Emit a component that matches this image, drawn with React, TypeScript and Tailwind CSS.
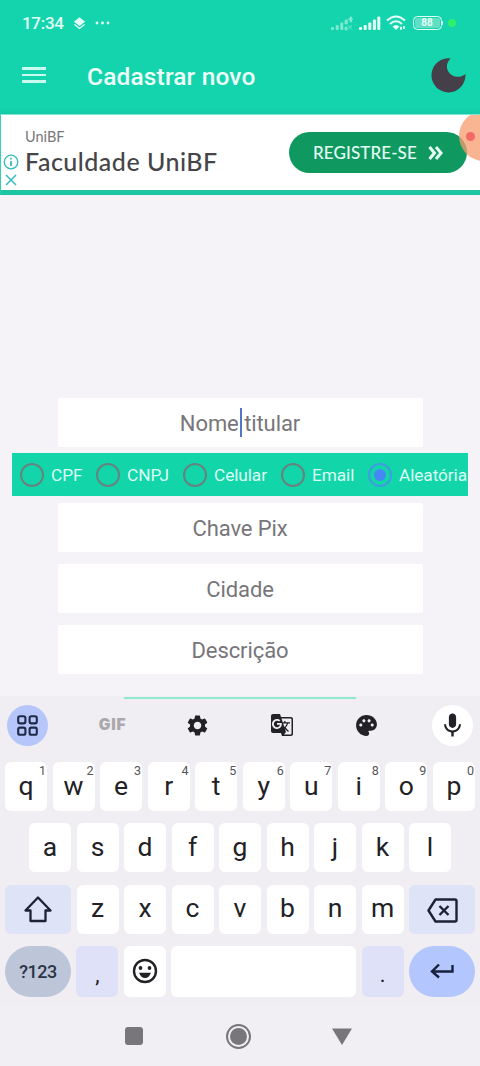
import {
  MdGTranslate,
  MdLayers,
  MdMic,
  MdPalette,
  MdSettings,
} from "react-icons/md";

const fields = ["Chave Pix", "Cidade", "Descrição"];

const keyTypes = [
  { label: "CPF", width: "w-[76px]" },
  { label: "CNPJ", width: "w-[87px]" },
  { label: "Celular", width: "w-[98px]" },
  { label: "Email", width: "w-[87px]" },
  { label: "Aleatória", width: "w-[90px]", checked: true },
];

const topRow = ["q", "w", "e", "r", "t", "y", "u", "i", "o", "p"];
const homeRow = ["a", "s", "d", "f", "g", "h", "j", "k", "l"];
const bottomRow = ["z", "x", "c", "v", "b", "n", "m"];

const Signal = ({ dim }: { dim?: boolean }) => (
  <svg width="22" height="15" viewBox="0 0 22 15" fill="#e4fff7" opacity={dim ? 0.5 : 1}>
    <rect x="0" y="11" width="3" height="3" rx="1" />
    <rect x="4.7" y="9" width="3" height="5" rx="1" />
    <rect x="9.3" y="6.5" width="3" height="7.5" rx="1" />
    {dim ? (
      <path d="M14 4h2.4v4H14zM14 11h2v3h-2zM19 1h1.6v5H19zM17.3 3.5L19.8 1l2 2.5zM17 9l4 4.5M21 9l-4 4.5" stroke="#e4fff7" strokeWidth="0.8" />
    ) : (
      <>
        <rect x="13.9" y="3.5" width="3" height="10.5" rx="1" />
        <rect x="18.3" y="0.5" width="3" height="13.5" rx="1" />
      </>
    )}
  </svg>
);

const StatusBar = () => (
  <div className="flex h-[46px] items-center pl-[22px] pr-[24px] text-[#e4fff7]">
    <span className="w-[42px] text-[17px] leading-none font-medium tracking-[-0.3px]">17:34</span>
    <MdLayers className="ml-[8px] size-[15px]" />
    <svg className="ml-[8px]" width="15" height="4" viewBox="0 0 15 4" fill="currentColor">
      <circle cx="2" cy="2" r="1.4" />
      <circle cx="7.5" cy="2" r="1.4" />
      <circle cx="13" cy="2" r="1.4" />
    </svg>
    <div className="ml-auto flex items-center">
      <Signal dim />
      <span className="w-[6px]" />
      <Signal />
      <svg className="ml-[5px]" width="20" height="16" viewBox="0 0 20 16" fill="none" stroke="currentColor" strokeWidth="2">
        <path d="M1 5.5Q10-2.5 19 5.5M4 9Q10 3.5 16 9" />
        <path d="M6.5 11.5Q10 8.5 13.5 11.5L10 15z" fill="currentColor" stroke="none" />
        <path d="M15 14.8v-3M18 11v3" strokeWidth="1.8" />
      </svg>
      <div className="ml-[7px] flex h-[14px] w-[29px] items-center justify-center rounded-[4.5px] border-[1.5px] border-current p-[1px]">
        <span className="flex h-full w-full items-center justify-center rounded-[2px] bg-[#5fe0c4] text-[10px] leading-none font-bold">88</span>
      </div>
      <span className="h-[4px] w-[1.5px] rounded-r bg-current" />
      <span className="ml-[5px] size-[8px] rounded-full bg-[#2ff06a]" />
    </div>
  </div>
);

const Header = () => (
  <header className="h-[114px] bg-[linear-gradient(#14d4ad_108px,#14c9a6_114px)]">
    <StatusBar />
    <div className="flex h-[61px] items-center pl-[22px] pr-[14px]">
      <div className="mb-[3px] flex w-[24px] flex-col gap-[4px]">
        <span className="h-[2.8px] bg-[#c9fbee]" />
        <span className="h-[2.8px] bg-[#c9fbee]" />
        <span className="h-[2.8px] bg-[#c9fbee]" />
      </div>
      <h1 className="ml-[41px] pt-[1px] text-[24.5px] leading-none font-medium tracking-[0.15px] text-[#effffa]">Cadastrar novo</h1>
      <svg className="mb-[2px] ml-auto" width="35" height="35" viewBox="0 0 35 35">
        <path d="M19.5.5A17 17 0 1 0 34.4 16C31 19.2 25.5 19.8 21 17.2C15 13.7 14 6 19.5.5z" fill="#443f48" />
      </svg>
    </div>
  </header>
);

const AdBanner = () => (
  <div className="relative flex h-[81px] items-center overflow-hidden border-t border-b-[5px] border-l border-t-[#7de8cf] border-b-[#1fc5a3] border-l-[#35d2b2] bg-white font-['Lato',sans-serif]">
    <div className="flex w-[24px] flex-col items-center self-end pr-[4px] pb-[4px]">
      <svg width="16" height="16" viewBox="0 0 16 16" fill="none" stroke="#35bdbd" strokeWidth="1.3">
        <circle cx="8" cy="8" r="6.8" />
        <path d="M8 7v5M8 3.8v1.7" strokeWidth="1.8" />
      </svg>
      <svg className="mt-[4px]" width="12" height="12" viewBox="0 0 12 12" fill="none" stroke="#35bdbd" strokeWidth="1.5">
        <path d="M1 1l10 10M11 1L1 11" />
      </svg>
    </div>
    <div className="pb-[1px]">
      <p className="text-[14.5px] leading-[18px] text-[#77777a]">UniBF</p>
      <p className="w-[210px] text-[25px] leading-[31px] font-medium tracking-[0.5px] whitespace-nowrap text-[#454548]">Faculdade UniBF</p>
    </div>
    <div className="ml-auto mr-[13px] flex h-[41px] w-[178px] shrink-0 items-center rounded-full bg-[#0f9961] pl-[24px] text-[17px] font-medium text-[#e5fff4]">
      <span className="w-[106px] tracking-[0.1px] whitespace-nowrap">REGISTRE-SE</span>
      <svg className="ml-[9px]" width="15" height="14" viewBox="0 0 15 14" fill="none" stroke="currentColor" strokeWidth="3">
        <path d="M1.5 1l5 6-5 6M8 1l5 6-5 6" />
      </svg>
    </div>
    <span className="absolute -right-[29px] -top-[4px] flex size-[50px] items-center rounded-full bg-[#f79b6e]/75 pl-[7px]">
      <span className="size-[9px] rounded-full bg-[#f0565a]/80" />
    </span>
  </div>
);

const Form = () => (
  <main className="flex h-[501px] flex-col items-center overflow-hidden bg-[#f5f3f7] pt-[203px] text-[22px] text-[#77757a]">
    <div className="flex h-[49px] w-[365px] items-center justify-center rounded-[2px] bg-white">
      <span className="pt-[2px] tracking-[-0.1px]">Nome</span>
      <span className="mx-[1px] h-[29px] w-[2px] bg-[#5275c8]" />
      <span className="pt-[2px] pl-[1.5px] tracking-[-0.1px]">titular</span>
    </div>
    <div className="mt-[6px] mb-[7px] flex h-[43px] w-[456px] shrink-0 items-center overflow-hidden bg-[#12d5a9] pl-[8px]">
      {keyTypes.map((k) => (
        <label key={k.label} className={`flex shrink-0 items-center ${k.width}`}>
          <span className={`flex size-[24px] shrink-0 items-center justify-center rounded-full border-[2.5px] ${k.checked ? "border-[#3d9ddf]" : "border-[#66837f]"}`}>
            {k.checked && <span className="size-[12px] rounded-full bg-[#4587f5]" />}
          </span>
          <span className="pt-[2px] pl-[7px] text-[17.3px] leading-none tracking-[-0.1px] whitespace-nowrap text-[#dcfff5]">{k.label}</span>
        </label>
      ))}
    </div>
    <div className="flex flex-col gap-[12.5px]">
      {fields.map((f) => (
        <div key={f} className="flex h-[48.5px] w-[365px] items-center justify-center rounded-[2px] bg-white pt-[1.5px] tracking-[-0.1px]">
          {f}
        </div>
      ))}
    </div>
  </main>
);

const Key = ({ label, hint }: { label: string; hint?: string }) => (
  <div className="relative flex h-[49px] w-[42px] items-center justify-center rounded-[6px] bg-white pb-[1px] text-[26.5px] leading-none">
    {label}
    {hint && <span className="absolute top-[3px] right-px text-[12.5px] leading-none text-[#555358]">{hint}</span>}
  </div>
);

const Toolbar = () => (
  <div className="flex h-[58px] items-center justify-between px-[7px]">
    <div className="flex size-[41px] items-center justify-center rounded-full bg-[#b6c6fb]">
      <svg width="21" height="21" viewBox="0 0 21 21" fill="none" stroke="#1e2b48" strokeWidth="2.1">
        <rect x="1.2" y="1.2" width="7.2" height="7.2" rx="1.8" />
        <rect x="12.6" y="1.2" width="7.2" height="7.2" rx="1.8" />
        <rect x="1.2" y="12.6" width="7.2" height="7.2" rx="1.8" />
        <rect x="12.6" y="12.6" width="7.2" height="7.2" rx="1.8" />
      </svg>
    </div>
    <div className="flex w-[41px] justify-center font-['Inter',sans-serif] text-[15.5px] font-black tracking-[0.8px] text-[#aaa8ac]">GIF</div>
    <div className="flex w-[41px] justify-center pr-[1px]"><MdSettings className="size-[25px]" /></div>
    <div className="flex w-[41px] justify-center pr-[2px]"><MdGTranslate className="size-[24px]" /></div>
    <div className="flex w-[41px] justify-center pr-[3px]"><MdPalette className="size-[25px]" /></div>
    <div className="flex size-[41px] items-center justify-center rounded-full bg-white"><MdMic className="size-[29px]" /></div>
  </div>
);

const Keyboard = () => (
  <section className="relative h-[310px] bg-[#f0eef2] text-[#222125]">
    <span className="absolute top-[1px] left-[124px] h-[2px] w-[232px] bg-[#90e8cd]" />
    <Toolbar />
    <div className="mt-[8px] flex flex-col gap-[12.3px] px-[5px]">
      <div className="flex justify-between">
        {topRow.map((k, i) => <Key key={k} label={k} hint={String((i + 1) % 10)} />)}
      </div>
      <div className="flex justify-between px-[24px]">
        {homeRow.map((k) => <Key key={k} label={k} />)}
      </div>
      <div className="flex justify-between">
        <div className="flex h-[49px] w-[66px] items-center justify-center rounded-[6px] bg-[#dee3f7]">
          <svg width="28" height="27" viewBox="0 0 28 27" fill="none" stroke="#1c2236" strokeWidth="2.3" strokeLinejoin="round">
            <path d="M14 1.5L26.5 14.5H21.5V25H6.5V14.5H1.5z" />
          </svg>
        </div>
        {bottomRow.map((k) => <Key key={k} label={k} />)}
        <div className="flex h-[49px] w-[66px] items-center justify-center rounded-[6px] bg-[#dee3f7]">
          <svg className="mt-[2px]" width="31" height="25" viewBox="0 0 31 25" fill="none" stroke="#1c2236" strokeWidth="2.4" strokeLinejoin="round">
            <path d="M8.5 1.5H28Q29.5 1.5 29.5 3V22Q29.5 23.5 28 23.5H8.5L1.5 12.5z" />
            <path d="M12.5 8l9 9M21.5 8l-9 9" />
          </svg>
        </div>
      </div>
      <div className="flex justify-between">
        <div className="flex h-[51px] w-[66px] items-center justify-center rounded-[26px] bg-[#bdc5d9] text-[18px] font-medium tracking-[-0.5px] text-[#2b3548]">?123</div>
        <div className="flex h-[51px] w-[42px] items-center justify-center rounded-[6px] bg-[#dee1f8] pt-[7px] text-[22px]">,</div>
        <div className="flex h-[51px] w-[42px] items-center justify-center rounded-[6px] bg-white">
          <svg width="26" height="26" viewBox="0 0 26 26">
            <circle cx="13" cy="13" r="11" fill="none" stroke="currentColor" strokeWidth="2.4" />
            <circle cx="8.5" cy="10" r="1.9" fill="currentColor" />
            <circle cx="17.5" cy="10" r="1.9" fill="currentColor" />
            <path d="M7 14.8h12Q17 20 13 20T7 14.8z" fill="currentColor" />
          </svg>
        </div>
        <div className="h-[51px] w-[185px] rounded-[6px] bg-white" />
        <div className="flex h-[51px] w-[42px] items-center justify-center rounded-[6px] bg-[#dee1f8] pt-[7px] text-[22px]">.</div>
        <div className="flex h-[51px] w-[66px] items-center justify-center rounded-[26px] bg-[#b3c6fd]">
          <svg width="24" height="16" viewBox="0 0 24 16" fill="none" stroke="#17213a" strokeWidth="2.4">
            <path d="M22.5 2v6.5H2M9 1.5L2 8.5l7 6" />
          </svg>
        </div>
      </div>
    </div>
  </section>
);

const NavBar = () => (
  <nav className="flex h-[60px] items-center bg-[#f1eff3] pl-[125px]">
    <span className="size-[18px] rounded-[3px] bg-[#79767b]" />
    <span className="ml-[83px] flex size-[25px] items-center justify-center rounded-full border-2 border-[#79767b]">
      <span className="size-[17px] rounded-full bg-[#79767b]" />
    </span>
    <svg className="ml-[81px]" width="20" height="17" viewBox="0 0 20 17" fill="#79767b">
      <path d="M0 .5h20L10 17z" />
    </svg>
  </nav>
);

const App = () => {
  return (
    <div className="h-[1066px] w-[480px] overflow-hidden bg-[#f1eff3] font-['Roboto',sans-serif]">
      <Header />
      <AdBanner />
      <Form />
      <Keyboard />
      <NavBar />
    </div>
  );
};

export default App;
